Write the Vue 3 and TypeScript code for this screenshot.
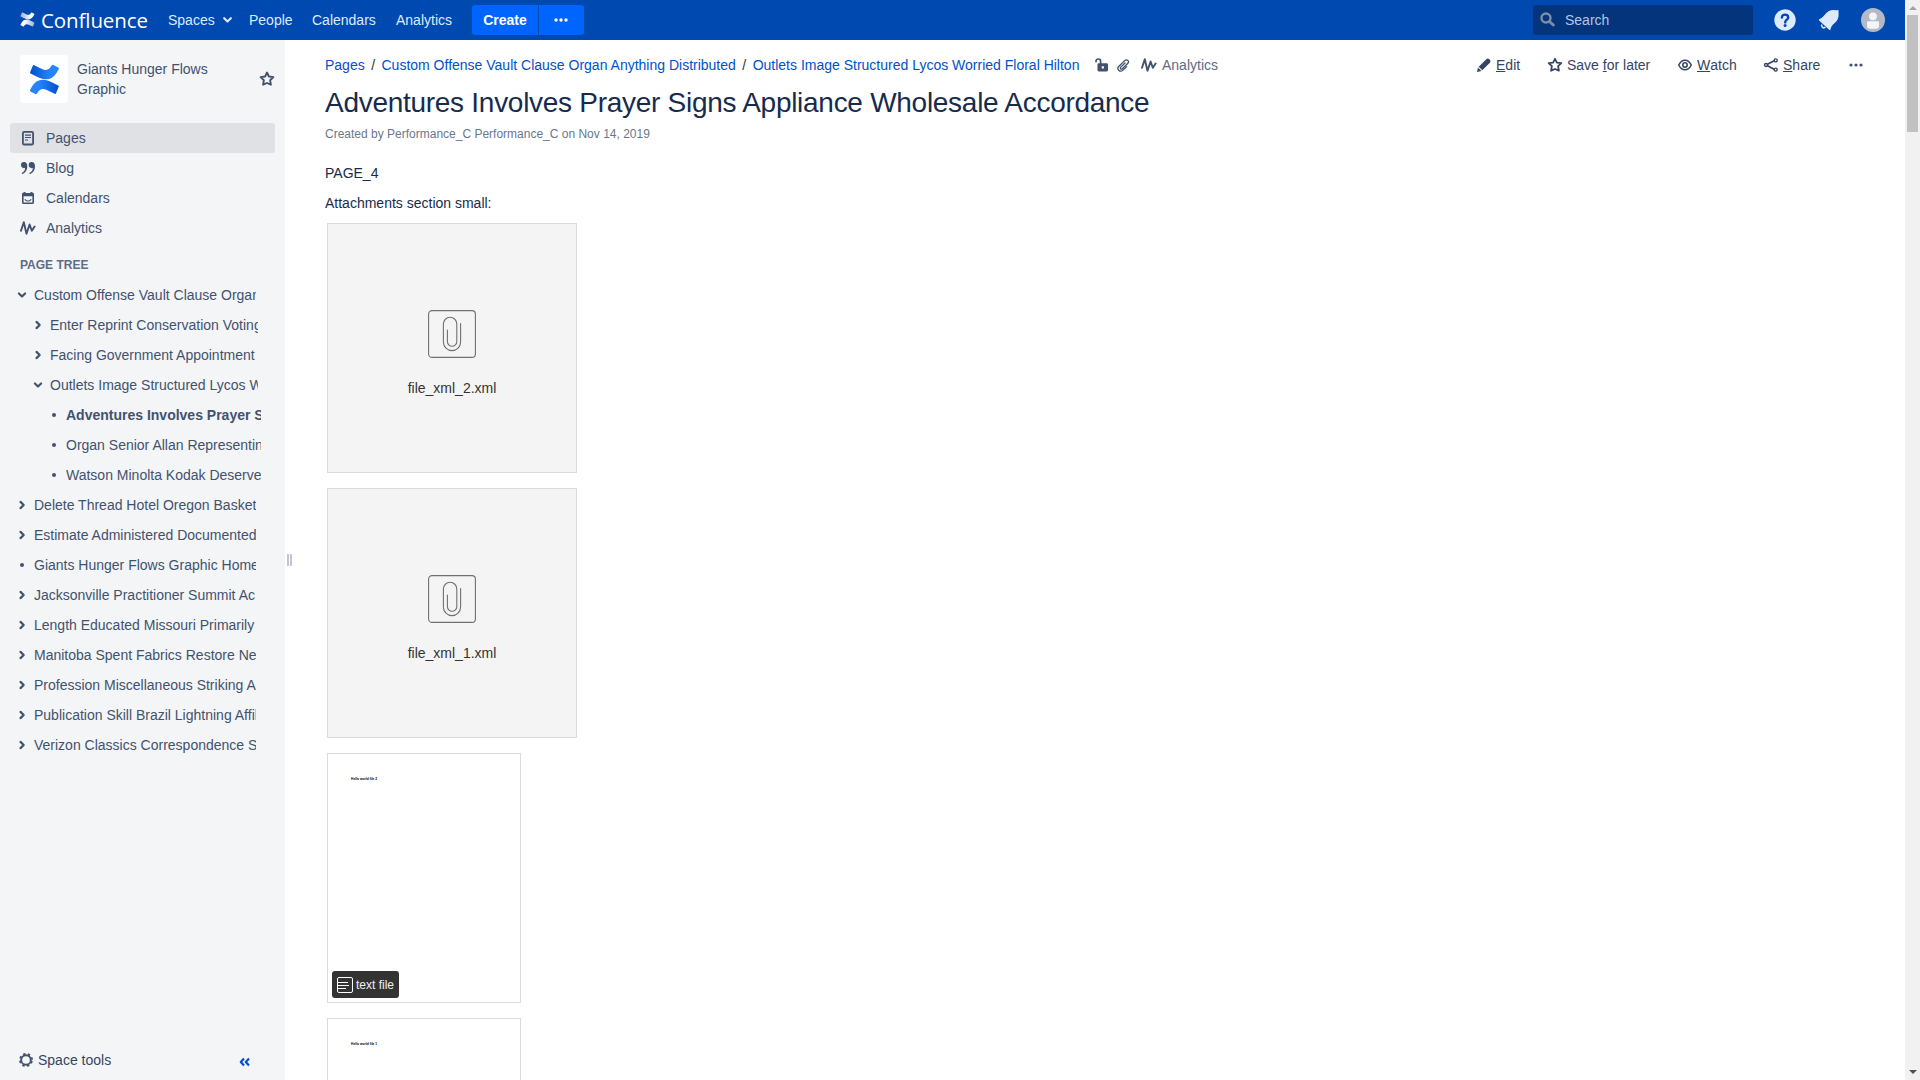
<script setup lang="ts">
interface TreeItem {
  title: string
  level: number
  state: 'open' | 'closed' | 'leaf'
  current?: boolean
}

const tree: TreeItem[] = [
  { title: 'Custom Offense Vault Clause Organ Anything Distributed', level: 0, state: 'open' },
  { title: 'Enter Reprint Conservation Voting', level: 1, state: 'closed' },
  { title: 'Facing Government Appointment', level: 1, state: 'closed' },
  { title: 'Outlets Image Structured Lycos Worried Floral Hilton', level: 1, state: 'open' },
  { title: 'Adventures Involves Prayer Signs Appliance Wholesale Accordance', level: 2, state: 'leaf', current: true },
  { title: 'Organ Senior Allan Representing', level: 2, state: 'leaf' },
  { title: 'Watson Minolta Kodak Deserve', level: 2, state: 'leaf' },
  { title: 'Delete Thread Hotel Oregon Basket', level: 0, state: 'closed' },
  { title: 'Estimate Administered Documented', level: 0, state: 'closed' },
  { title: 'Giants Hunger Flows Graphic Home', level: 0, state: 'leaf' },
  { title: 'Jacksonville Practitioner Summit Ac', level: 0, state: 'closed' },
  { title: 'Length Educated Missouri Primarily', level: 0, state: 'closed' },
  { title: 'Manitoba Spent Fabrics Restore Ne', level: 0, state: 'closed' },
  { title: 'Profession Miscellaneous Striking A', level: 0, state: 'closed' },
  { title: 'Publication Skill Brazil Lightning Affili', level: 0, state: 'closed' },
  { title: 'Verizon Classics Correspondence S', level: 0, state: 'closed' },
]

const files = ['file_xml_2.xml', 'file_xml_1.xml']

const ribbon =
  'M5.200 1.200Q4.200.8 3.800 1.700L1.100 8.200Q.8 9.100 1.600 9.500L8.500 13C17 17 23 16 27.500 9L29.800 4.900Q30.100 4 29.300 3.600L24.300.9Q23.400.6 22.900 1.300C20 6 17.500 7 12.500 4.700Z'
</script>

<template>
  <div class="app">
    <div class="window">
      <header class="top">
        <a class="brand">
          <svg width="15" height="15" viewBox="0 0 31 31">
            <defs>
              <linearGradient id="wa"><stop offset="0" stop-color="#fff" stop-opacity=".6" /><stop offset=".75" stop-color="#fff" /></linearGradient>
            </defs>
            <path fill="url(#wa)" :d="ribbon" />
            <path fill="url(#wa)" :d="ribbon" transform="rotate(180 15.400 15.500)" />
          </svg>
          <span>Confluence</span>
        </a>
        <nav class="menu">
          <a class="spaces">Spaces
            <svg width="9" height="6" viewBox="0 0 9 6"><path d="M1.200 1.200 4.500 4.400 7.800 1.200" fill="none" stroke="#deebff" stroke-width="2.100" stroke-linecap="round" stroke-linejoin="round" /></svg>
          </a>
          <a class="people">People</a>
          <a class="cal">Calendars</a>
          <a>Analytics</a>
        </nav>
        <button class="create">Create</button>
        <button class="more">
          <svg width="14" height="4" viewBox="0 0 14 4" fill="#fff"><circle cx="2" cy="2" r="1.700" /><circle cx="7" cy="2" r="1.700" /><circle cx="12" cy="2" r="1.700" /></svg>
        </button>
        <div class="search">
          <svg width="15" height="15" viewBox="0 0 15 15"><circle cx="6" cy="6" r="4.500" fill="none" stroke="#7f8da5" stroke-width="2.400" /><path d="m9.500 9.500 3.800 3.600" stroke="#7f8da5" stroke-width="2.800" stroke-linecap="round" /></svg>
          <span>Search</span>
        </div>
        <svg class="help" width="22" height="22" viewBox="0 0 22 22">
          <circle cx="11" cy="11" r="10.700" fill="#deebff" />
          <path d="M7.900 8.600C7.900 6.600 9.200 5.600 11 5.600s3.200 1.100 3.200 2.800c0 2.300-3 2.300-3 5" fill="none" stroke="#0049b0" stroke-width="2.400" stroke-linecap="round" />
          <circle cx="11.100" cy="16.500" r="1.500" fill="#0049b0" />
        </svg>
        <svg class="bell" width="22" height="22" viewBox="0 0 22 22" fill="#deebff">
          <path d="M1.300 10.200C4 9.400 5.500 7.300 7.600 4.800 9.800 2.100 12.500.8 15.800 1l2.900.2q.9-.6 1.600.1t.2 1.600l.1 2.900c.1 3.300-1.200 6-3.900 8.100-2.500 2-3.700 3.700-4.300 6.800q-.3.700-1 .2L.9 11.200q-.4-.7.4-1Z" />
          <path d="M3.900 15.500a2.200 2.200 0 0 0 3.500 2.600" fill="none" stroke="#deebff" stroke-width="1.500" />
        </svg>
        <svg class="avatar" width="24" height="24" viewBox="0 0 24 24">
          <circle cx="12" cy="12" r="12" fill="#b3bac5" /><circle cx="12" cy="8.300" r="3.900" fill="#f4f5f7" />
          <path d="M6 14.500Q6 13.200 7.300 13.200h9.400q1.300 0 1.300 1.300v3.300q0 3-3 3H9q-3 0-3-3Z" fill="#f4f5f7" />
        </svg>
      </header>

      <div class="body">
        <aside class="side">
          <div class="space">
            <div class="logo">
              <svg width="31" height="31" viewBox="0 0 31 31">
                <defs>
                  <linearGradient id="ba"><stop offset="0" stop-color="#0052cc" /><stop offset=".7" stop-color="#2684ff" /></linearGradient>
                </defs>
                <path fill="url(#ba)" :d="ribbon" />
                <path fill="url(#ba)" :d="ribbon" transform="rotate(180 15.400 15.500)" />
              </svg>
            </div>
            <div class="space-name">Giants Hunger Flows Graphic</div>
            <svg class="fav" width="16" height="16" viewBox="0 0 16 16"><path d="m8 1.500 1.900 4 4.500.6-3.300 3.100.8 4.500L8 12l-3.900 1.700.8-4.500L1.600 6.100l4.500-.6Z" fill="none" stroke="#42526e" stroke-width="1.900" stroke-linejoin="round" /></svg>
          </div>

          <nav class="links">
            <a class="on">
              <svg width="16" height="16" viewBox="0 0 16 16" fill="none" stroke="#42526e"><rect x="2.900" y="1.900" width="10.200" height="12.600" rx="1.300" stroke-width="1.800" /><path d="M5 5.200h6M5 7.500h6M5 10h3" stroke-width="1.200" /></svg>
              Pages</a>
            <a>
              <svg width="16" height="16" viewBox="0 0 16 16" fill="#42526e"><path d="M1 5.100a3 3 0 0 1 3.100-3.100C6.300 2 7.300 3.700 7.300 6c0 4.200-2 7.300-5.300 8l-.3-1.100C4 12 5 10.400 5.100 8 2.700 8.600 1 7.200 1 5.100ZM8.700 5.100A3 3 0 0 1 11.800 2C14 2 15 3.700 15 6c0 4.200-2 7.300-5.300 8l-.3-1.100C11.700 12 12.700 10.400 12.800 8 10.400 8.600 8.700 7.200 8.700 5.100Z" /></svg>
              Blog</a>
            <a>
              <svg width="16" height="16" viewBox="0 0 16 16"><rect x="2.800" y="3.800" width="10.400" height="9.400" rx=".8" fill="none" stroke="#42526e" stroke-width="1.600" /><path d="M2 3.200h12v3H2ZM3.500 2h2v2h-2ZM10.500 2h2v2h-2Z" fill="#42526e" /><path d="M4.800 9.300Q8 12.700 11.200 9.300" fill="none" stroke="#42526e" stroke-width="1.200" /></svg>
              Calendars</a>
            <a>
              <svg width="16" height="16" viewBox="0 0 16 16"><path d="M1 10.800 3.800 2.200 6.500 13.700 9.600 4.500 11.800 10.800 14.600 6.500" fill="none" stroke="#42526e" stroke-width="1.900" stroke-linejoin="round" stroke-linecap="round" /></svg>
              Analytics</a>
          </nav>

          <h5>PAGE TREE</h5>
          <ul class="tree">
            <li v-for="item in tree" :key="item.title" :class="['l' + item.level, { current: item.current }]">
              <span class="mark">
                <svg v-if="item.state === 'open'" width="10" height="10" viewBox="0 0 10 10"><path d="M1.900 3.500 5 6.500 8.100 3.500" /></svg>
                <svg v-else-if="item.state === 'closed'" width="10" height="10" viewBox="0 0 10 10"><path d="M3.500 1.900 6.700 5 3.500 8.100" /></svg>
                <i v-else></i>
              </span>
              <span class="label">{{ item.title }}</span>
            </li>
          </ul>

          <div class="tools">
            <svg width="16" height="16" viewBox="0 0 16 16" fill="none" stroke="#42526e"><circle cx="8" cy="8" r="6.100" stroke-width="1.700" stroke-dasharray="2.400 2.391" transform="rotate(11 8 8)" /><circle cx="8" cy="8" r="4.800" stroke-width="1.900" /></svg>
            <span>Space tools</span>
            <svg class="collapse" width="12" height="10" viewBox="0 0 12 10"><path d="M5 1.500 1.800 5 5 8.500M10 1.500 6.800 5 10 8.500" fill="none" stroke="#0052cc" stroke-width="2.200" stroke-linejoin="round" /></svg>
          </div>
        </aside>
        <div class="grip"><i></i></div>

        <main>
          <div class="bar">
            <div class="crumbs">
              <a>Pages</a><b>/</b><a>Custom Offense Vault Clause Organ Anything Distributed</a><b>/</b><a>Outlets Image Structured Lycos Worried Floral Hilton</a>
            </div>
            <svg class="lock" width="16" height="16" viewBox="0 0 16 16"><path d="M2 5.200V4.300a2.300 2.300 0 0 1 4.600 0v3" fill="none" stroke="#42526e" stroke-width="1.700" /><path fill-rule="evenodd" d="M4.800 6.300h7.900q1.300 0 1.300 1.300v5.500q0 1.300-1.300 1.300H4.800q-1.300 0-1.300-1.300V7.600q0-1.300 1.300-1.300Zm2.900 3v2.200h2.200V9.300Z" fill="#42526e" /></svg>
            <svg class="clip" width="16" height="16" viewBox="0 0 16 16"><path d="M11.700 9.600 8 13.100C6.600 14.400 4.800 14.300 3.700 13.200S2.600 10.500 3.900 9.200L9.700 3.600c1-1 2.400-.9 3.200-.1s.8 2-.2 3L7.300 11.700c-.6.600-1.300.5-1.700.1s-.5-1.100.1-1.700L10 6" fill="none" stroke="#42526e" stroke-width="1.300" stroke-linecap="round" /></svg>
            <svg class="wave" width="16" height="16" viewBox="0 0 16 16"><path d="M1 10.800 3.800 2.200 6.500 13.700 9.600 4.500 11.800 10.800 14.600 6.500" fill="none" stroke="#42526e" stroke-width="1.900" stroke-linejoin="round" stroke-linecap="round" /></svg>
            <a class="stats">Analytics</a>
            <div class="actions">
              <a class="edit"><svg width="16" height="16" viewBox="0 0 16 16" fill="#344563"><path d="M1 15 2 10.500 5.500 14ZM2.700 9.700 10.300 2.200Q11.800.8 13.300 2.200L13.900 2.800Q15.300 4.200 13.900 5.700L6.300 13.300Z" /></svg><u>E</u>dit</a>
              <a class="save"><svg width="16" height="16" viewBox="0 0 16 16"><path d="m8 1.800 1.900 3.800 4.400.6-3.200 3 .8 4.500L8 12l-3.900 1.700.8-4.500-3.200-3 4.400-.6Z" fill="none" stroke="#344563" stroke-width="1.800" stroke-linejoin="round" /></svg>Save&nbsp;<u>f</u>or later</a>
              <a class="watch"><svg width="16" height="16" viewBox="0 0 16 16" fill="none" stroke="#344563"><path d="M1.700 8Q4.200 3.200 8 3.200T14.300 8Q11.800 12.800 8 12.800T1.700 8Z" stroke-width="1.500" /><circle cx="8" cy="8" r="2.200" stroke-width="1.500" /></svg><u>W</u>atch</a>
              <a class="share"><svg width="16" height="16" viewBox="0 0 16 16" fill="none" stroke="#344563"><path d="m4.500 7.200 6.700-3.400M4.500 8.800l6.700 3.400" stroke-width="1.700" /><circle cx="3" cy="8" r="1.500" stroke-width="1.400" /><circle cx="12.700" cy="3.400" r="1.500" stroke-width="1.400" /><circle cx="12.700" cy="12.600" r="1.500" stroke-width="1.400" /></svg><u>S</u>hare</a>
              <svg width="14" height="4" viewBox="0 0 14 4" fill="#42526e"><circle cx="2" cy="2" r="1.600" /><circle cx="7" cy="2" r="1.600" /><circle cx="12" cy="2" r="1.600" /></svg>
            </div>
          </div>
          <h1>Adventures Involves Prayer Signs Appliance Wholesale Accordance</h1>
          <p class="meta">Created by Performance_C Performance_C on Nov 14, 2019</p>
          <p class="text">PAGE_4</p>
          <p class="text">Attachments section small:</p>
          <div class="files">
            <div v-for="f in files" :key="f" class="file">
              <svg width="48" height="48" viewBox="0 0 48 48" fill="none" stroke="#707070" stroke-width="1.100">
                <rect x=".6" y=".6" width="46.800" height="46.800" rx="3.500" />
                <path d="M32.600 13.500V32a8.600 8.600 0 0 1-17.200 0V14a6.700 6.700 0 0 1 13.400 0v17.500a4.700 4.700 0 0 1-9.400 0V20" stroke-linecap="round" />
              </svg>
              <span>{{ f }}</span>
            </div>
            <div class="file doc">
              <span class="tiny">Hello world file 2</span>
              <div class="tag">
                <svg width="16" height="16" viewBox="0 0 16 16" fill="none" stroke="#fff"><rect x=".5" y=".5" width="15" height="15" rx="1.500" /><path d="M1 5.500h10M1 8.500h11M1 11.500h8" /></svg>
                <span>text file</span>
              </div>
            </div>
            <div class="file doc"><span class="tiny">Hello world file 1</span></div>
          </div>
        </main>
      </div>
    </div>
    <div class="scroll">
      <i class="up"></i><i class="thumb"></i><i class="down"></i>
    </div>
  </div>
</template>

<style>
body { overflow: hidden; }
</style>

<style scoped>
* { box-sizing: border-box; }
.app { display: flex; width: 1920px; height: 1080px; overflow: hidden; font: 14px/20px "Liberation Sans", Arial, sans-serif; color: #172b4d; background: #fff; }
.window { display: flex; flex-direction: column; width: 1905px; height: 1080px; }
svg { display: block; flex: none; }
.top { display: flex; align-items: center; height: 40px; flex: none; background: #0049b0; border-bottom: 1px solid #0747a6; padding-left: 20px; color: #deebff; }
.brand { display: flex; align-items: center; width: 148px; }
.brand span { margin-left: 6px; font: 20.500px/28px "Open Sans", sans-serif; color: #fff; white-space: nowrap; letter-spacing: -.1px; }
.menu { display: flex; width: 304px; }
.menu a { display: flex; align-items: center; }
.menu .spaces { width: 81px; gap: 8px; }
.menu .people { width: 63px; }
.menu .cal { width: 84px; }
button { height: 30px; border: 0; background: #0065ff; color: #fff; font: bold 14px/20px "Liberation Sans", Arial, sans-serif; padding: 0; }
.create { width: 66px; border-radius: 3px 0 0 3px; margin-right: 1px; }
.more { width: 45px; border-radius: 0 3px 3px 0; display: flex; align-items: center; justify-content: center; padding-right: 2px; }
.search { display: flex; align-items: center; width: 220px; height: 30px; margin-left: 949px; padding-left: 7px; border-radius: 3px; background: #04347c; color: #b5c6e2; }
.search span { margin-left: 10px; }
.help { margin-left: 21px; }
.bell { margin-left: 22px; }
.avatar { margin-left: 21px; }

.body { display: flex; flex: 1; min-height: 0; }
.side { display: flex; flex-direction: column; width: 285px; background: #f4f5f7; color: #42526e; }
.space { display: flex; align-items: center; padding: 15px 10px 0 20px; height: 63px; }
.logo { display: flex; align-items: center; justify-content: center; width: 48px; height: 48px; background: #fff; border-radius: 3px; }
.space-name { width: 150px; margin-left: 9px; }
.fav { margin-left: 32px; }
.links { margin: 20px 10px 0; }
.links a { display: flex; align-items: center; gap: 10px; height: 30px; padding-left: 10px; border-radius: 3px; }
.links .on { background: #dfe1e5; }
h5 { margin: 12px 0 5px 20px; font-size: 12px; line-height: 20px; color: #5e6c84; }
.tree { list-style: none; margin: 0; padding: 0; }
.tree li { display: flex; align-items: center; height: 30px; padding-left: 17px; }
.tree .l1 { padding-left: 33px; }
.tree .l2 { padding-left: 49px; }
.mark { display: flex; align-items: center; justify-content: center; width: 10px; margin-right: 7px; }
.mark path { fill: none; stroke: #42526e; stroke-width: 2.200; stroke-linecap: round; stroke-linejoin: round; }
.mark i { width: 4px; height: 4px; border-radius: 50%; background: #42526e; }
.label { width: 222px; white-space: nowrap; overflow: hidden; }
.l1 .label { width: 208px; }
.l2 .label { width: 195px; }
.current { font-weight: bold; }
.tools { display: flex; align-items: center; height: 40px; margin-top: auto; padding-left: 18px; }
.tools span { margin-left: 4px; width: 201px; color: #344563; }
.collapse { margin-top: 4px; }
.grip { display: flex; align-items: center; width: 10px; padding: 0 0 0 2px; }
.grip i { width: 5px; height: 12px; border: solid #c1c7d0; border-width: 0 2px; }

main { flex: 1; padding: 15px 0 0 30px; min-width: 0; overflow: hidden; }
.bar { display: flex; align-items: center; height: 20px; white-space: nowrap; }
.crumbs { display: flex; width: 769px; color: #0052cc; }
.crumbs b { font-weight: normal; color: #333; width: 16.800px; text-align: center; }
.clip { margin-left: 5px; }
.wave { margin-left: 10px; }
.stats { margin-left: 5px; color: #5e6c84; }
.actions { display: flex; align-items: center; margin-left: auto; margin-right: 42px; color: #344563; }
.actions a { display: flex; align-items: center; }
.actions a svg { margin-right: 4px; }
.edit { width: 71px; }
.save { width: 130px; }
.watch { width: 86px; }
.share { width: 86px; }
h1 { margin: 12px 0 0; font-size: 28px; line-height: 32px; font-weight: normal; letter-spacing: -.28px; }
.meta { margin: 5px 0 0; font-size: 12px; line-height: 20px; color: #6b778c; }
.text { margin: 10px 0 0; }
.meta + .text { margin-top: 19px; }
.files { padding: 10px 0 0 2px; }
.file { display: flex; flex-direction: column; align-items: center; width: 250px; height: 250px; margin-bottom: 15px; padding-top: 86px; border: 1px solid #dadada; background: #f4f4f4; color: #333; }
.file > span { margin-top: 20px; }
.doc { position: relative; align-items: flex-start; width: 194px; padding: 23px 0 0 23px; background: #fff; }
.doc .tiny { margin: 0; font: bold 3.300px/5px "Liberation Sans", Arial, sans-serif; color: #000; white-space: nowrap; }
.tag { position: absolute; left: 4px; bottom: 4px; display: flex; align-items: center; width: 67px; height: 27px; padding-left: 5px; border-radius: 3px; background: #333; color: #f0f0f0; font-size: 12px; }
.tag span { margin-left: 3px; white-space: nowrap; }

.scroll { display: flex; flex-direction: column; align-items: center; width: 15px; height: 1080px; background: #f1f1f1; }
.up { margin-top: 6px; border: solid transparent; border-width: 0 4px 4px; border-bottom-color: #a3a3a3; }
.thumb { width: 11px; height: 117px; margin-top: 5px; background: #c1c1c1; }
.down { margin: auto 0 6px; border: solid transparent; border-width: 4px 4px 0; border-top-color: #505050; }
</style>
